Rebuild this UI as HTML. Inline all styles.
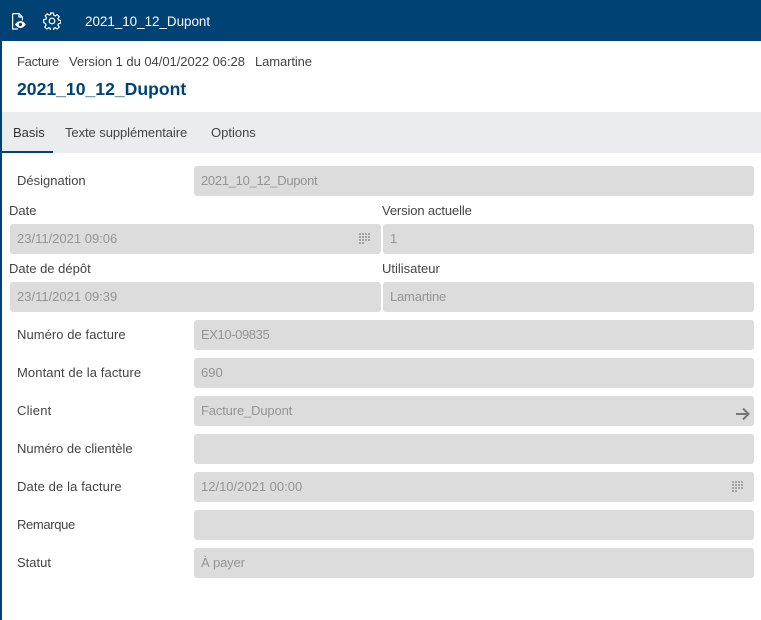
<!DOCTYPE html>
<html><head><meta charset="utf-8"><style>
html,body{margin:0;padding:0;background:#fff}
#p{position:relative;width:761px;height:620px;overflow:hidden;background:#fff;font-family:"Liberation Sans",sans-serif;font-size:13px;color:#444}
#p div{position:absolute;white-space:nowrap}
.f{background:#dcdcdc;border-radius:3px;height:30px;line-height:30px;color:#949494;box-sizing:border-box;padding-left:7px}
.l{line-height:18px;height:18px}
</style></head><body><div id="p">
<div style="left:0;top:0;width:761px;height:41px;background:#004274"></div>
<div style="left:0;top:41px;width:1.5px;height:579px;background:#004274"></div>
<svg style="position:absolute;left:12px;top:13px" width="14" height="17" viewBox="0 0 14 17" fill="none" stroke="#fff" stroke-width="1.2"><path d="M.6 .6v15.400h5.400M.6 .6h6.400l3.400 3.400v3.500M7 .6v3.400h3.400"/><path d="M3 11.500c1.800-2.400 3.500-3.400 5.400-3.400s3.800 1 5.400 3.400c-1.600 2.400-3.500 3.400-5.400 3.400s-3.600-1-5.400-3.400z" fill="#fff" stroke="none"/><circle cx="8.400" cy="11.500" r="1.600" fill="#004274" stroke="none"/></svg>
<svg style="position:absolute;left:43px;top:12px" width="18" height="18" viewBox="0 0 18 18" fill="none" stroke="#fff" stroke-width="1.2"><circle cx="9" cy="9" r="2.800"/><path d="M7.600 1h2.800l.4 2.300 1.400.6 2-1.300 2 2-1.300 2 .6 1.400 2.300.4v2.800l-2.300.4-.6 1.400 1.300 2-2 2-2-1.300-1.400.6-.4 2.300H7.600l-.4-2.300-1.400-.6-2 1.300-2-2 1.300-2-.6-1.400L.6 10.400V7.600l2.300-.4.6-1.400-1.300-2 2-2 2 1.300 1.400-.6z"/></svg>
<div style="left:85px;top:13px;line-height:18px;color:#fff;font-size:13.400px">2021_10_12_Dupont</div>
<div class="l" style="left:17px;top:53px;letter-spacing:-.3px">Facture</div>
<div class="l" style="left:69px;top:53px;letter-spacing:-.04px">Version 1 du 04/01/2022 06:28</div>
<div class="l" style="left:255px;top:53px;letter-spacing:-.1px">Lamartine</div>
<div style="left:17px;top:78px;line-height:22px;font-size:17.600px;font-weight:bold;color:#004274">2021_10_12_Dupont</div>
<div style="left:1.500px;top:112px;width:760px;height:41px;background:#ebecee"></div>
<div style="left:1.500px;top:151px;width:51.500px;height:2px;background:#004274"></div>
<div class="l" style="left:13px;top:124px;color:#333">Basis</div>
<div class="l" style="left:65px;top:124px;letter-spacing:-.07px">Texte supplémentaire</div>
<div class="l" style="left:211px;top:124px">Options</div>

<div class="l" style="left:17px;top:172px">Désignation</div>
<div class="f" style="left:194px;top:166px;width:560px;letter-spacing:-.3px">2021_10_12_Dupont</div>
<div class="l" style="left:9px;top:202px">Date</div>
<div class="l" style="left:382px;top:202px;letter-spacing:-.13px">Version actuelle</div>
<div class="f" style="left:10px;top:224px;width:371px">23/11/2021 09:06</div>
<div class="f" style="left:383px;top:224px;width:371px">1</div>
<div class="l" style="left:9px;top:260px">Date de dépôt</div>
<div class="l" style="left:382px;top:260px">Utilisateur</div>
<div class="f" style="left:10px;top:282px;width:371px">23/11/2021 09:39</div>
<div class="f" style="left:383px;top:282px;width:371px;letter-spacing:-.2px">Lamartine</div>

<div class="l" style="left:17px;top:326px;letter-spacing:.06px">Numéro de facture</div>
<div class="f" style="left:194px;top:320px;width:560px;letter-spacing:-.4px">EX10-09835</div>
<div class="l" style="left:17px;top:364px;letter-spacing:.1px">Montant de la facture</div>
<div class="f" style="left:194px;top:358px;width:560px">690</div>
<div class="l" style="left:17px;top:402px;letter-spacing:.2px">Client</div>
<div class="f" style="left:194px;top:396px;width:560px;letter-spacing:-.15px">Facture_Dupont</div>
<div class="l" style="left:17px;top:440px">Numéro de clientèle</div>
<div class="f" style="left:194px;top:434px;width:560px"></div>
<div class="l" style="left:17px;top:478px;letter-spacing:.12px">Date de la facture</div>
<div class="f" style="left:194px;top:472px;width:560px">12/10/2021 00:00</div>
<div class="l" style="left:17px;top:516px;letter-spacing:-.35px">Remarque</div>
<div class="f" style="left:194px;top:510px;width:560px"></div>
<div class="l" style="left:17px;top:554px">Statut</div>
<div class="f" style="left:194px;top:548px;width:560px;letter-spacing:-.15px">À payer</div>

<svg style="position:absolute;left:359px;top:233px" width="12" height="12" fill="#a3a3a3"><path d="M0 0h2v2H0zM3 0h2v2H3zM6 0h2v2H6zM9 0h2v2H9zM0 3h2v2H0zM3 3h2v2H3zM6 3h2v2H6zM9 3h2v2H9zM0 6h2v2H0zM3 6h2v2H3zM6 6h2v2H6zM9 6h2v2H9zM0 9h2v2H0zM3 9h2v2H3z"/></svg>
<svg style="position:absolute;left:732px;top:481px" width="12" height="12" fill="#a3a3a3"><path d="M0 0h2v2H0zM3 0h2v2H3zM6 0h2v2H6zM9 0h2v2H9zM0 3h2v2H0zM3 3h2v2H3zM6 3h2v2H6zM9 3h2v2H9zM0 6h2v2H0zM3 6h2v2H3zM6 6h2v2H6zM9 6h2v2H9zM0 9h2v2H0zM3 9h2v2H3z"/></svg>
<svg style="position:absolute;left:736px;top:407px" width="14" height="14" fill="none" stroke="#777" stroke-width="2"><path d="M0 7h12.500M7 1.500l5.500 5.500-5.500 5.500"/></svg>
</div></body></html>
